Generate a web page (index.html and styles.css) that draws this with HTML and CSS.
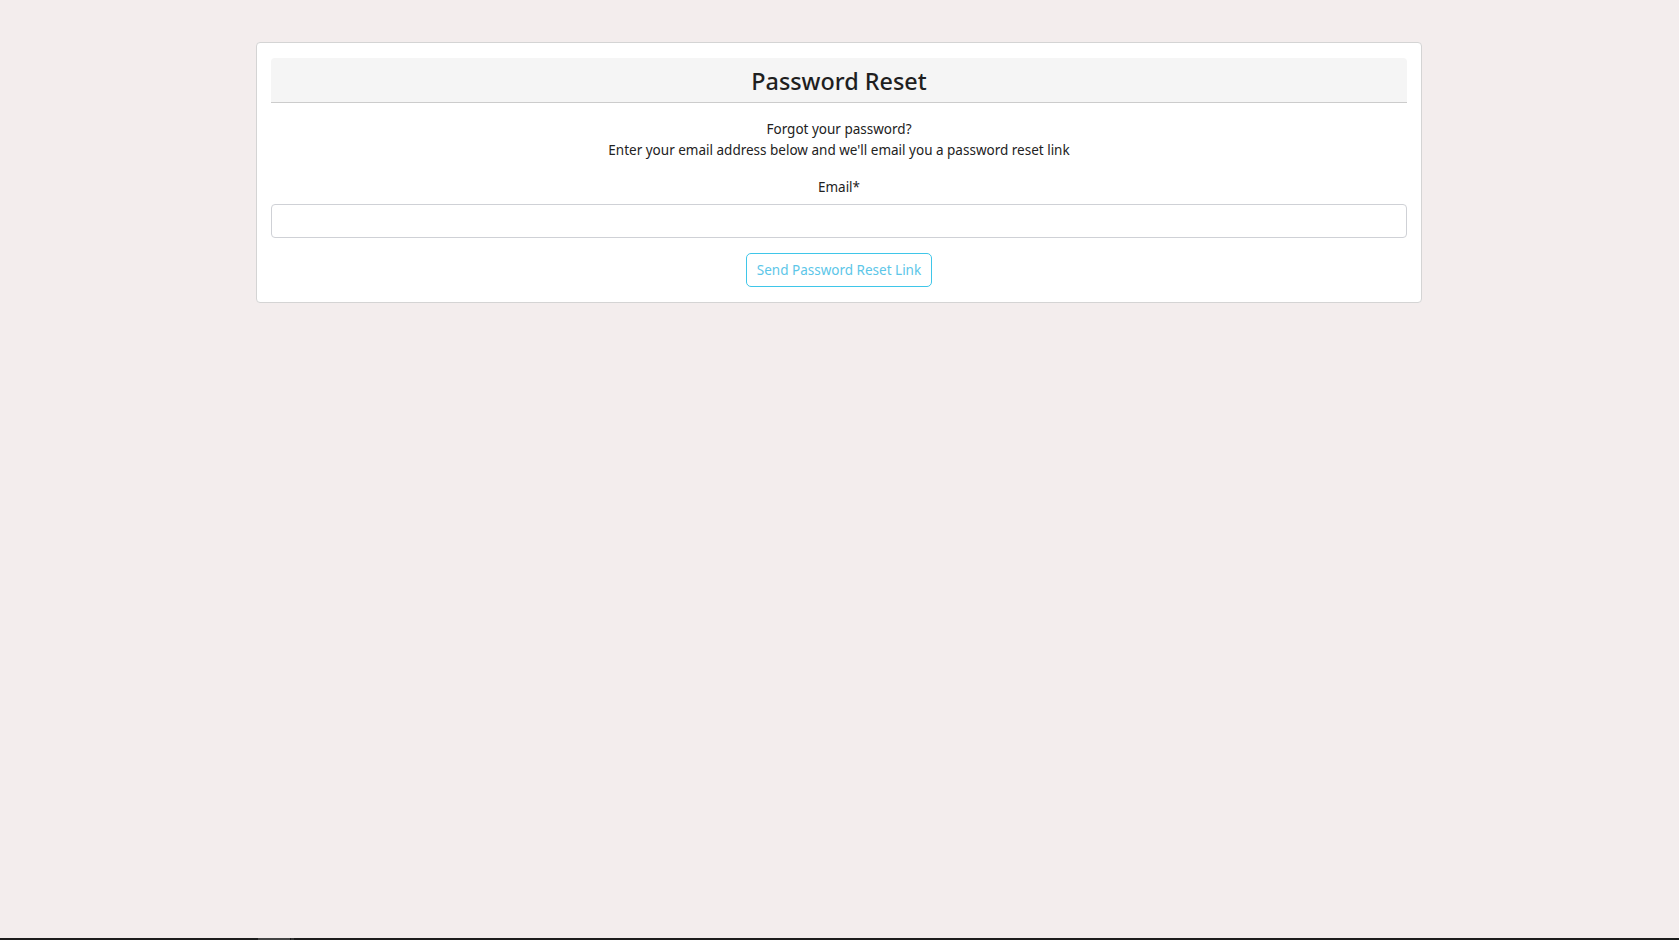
FILE: index.html
```html
<!DOCTYPE html>
<html lang="en">
<head>
<meta charset="utf-8">
<title>Password Reset</title>
<link rel="stylesheet" href="styles.css">
</head>
<body>
<main class="container">
  <section class="card">
    <header class="card-header">
      <h3 class="title">Password Reset</h3>
    </header>
    <div class="intro">
      <p>Forgot your password?</p>
      <p>Enter your email address below and we'll email you a password reset link</p>
    </div>
    <form class="form">
      <label class="label" for="email">Email*</label>
      <input class="input" id="email" type="email">
      <button class="btn" type="button">Send Password Reset Link</button>
    </form>
  </section>
</main>
<div class="taskbar"><span class="task-a"></span><span class="task-b"></span></div>
</body>
</html>
```
FILE: styles.css
```css
html, body {
  margin: 0;
  padding: 0;
}
body {
  background: #f3eded;
  font-family: "Noto Sans", "Open Sans", sans-serif;
  color: #222;
  font-size: 13.5px;
  min-height: 940px;
  padding-right: 1px;
}
.container {
  width: 1166px;
  margin: 42px auto 0;
}
.card {
  background: #fff;
  border: 1px solid #d4d4d4;
  border-radius: 4px;
  padding: 15px 14px 15px;
  box-sizing: border-box;
}
.card-header {
  background: #f5f5f5;
  border-bottom: 1px solid #cccccc;
  border-radius: 4px 4px 0 0;
  height: 44px;
  display: flex;
  align-items: center;
  justify-content: center;
}
.title {
  margin: 0;
  font-size: 23.4px;
  font-weight: 500;
  color: #1f1f1f;
  line-height: 30px;
  padding-top: 2px;
}
.intro {
  margin-top: 16px;
  text-align: center;
}
.intro p {
  margin: 0;
  line-height: 21px;
}
.form {
  display: flex;
  flex-direction: column;
  align-items: center;
  margin-top: 16px;
}
.label {
  line-height: 20px;
}
.input {
  margin-top: 7px;
  width: 100%;
  height: 34px;
  box-sizing: border-box;
  border: 1px solid #cfd1d6;
  border-radius: 4px;
  background: #fff;
  padding: 6px 12px;
  font: inherit;
}
.btn {
  margin-top: 15px;
  width: 186px;
  height: 34px;
  box-sizing: border-box;
  background: #fff;
  border: 1px solid #3fc6e9;
  border-radius: 5px;
  color: #5cc6e8;
  font-family: inherit;
  font-size: 13.5px;
  padding: 0;
}
.taskbar {
  position: fixed;
  left: 0;
  right: 0;
  bottom: 0;
  height: 2px;
  background: #1c1c1c;
  display: flex;
  padding-left: 258px;
}
.task-a {
  width: 32px;
  background: #444;
}
.task-b {
  width: 3px;
  margin-left: 1px;
  background: #333;
}
```
